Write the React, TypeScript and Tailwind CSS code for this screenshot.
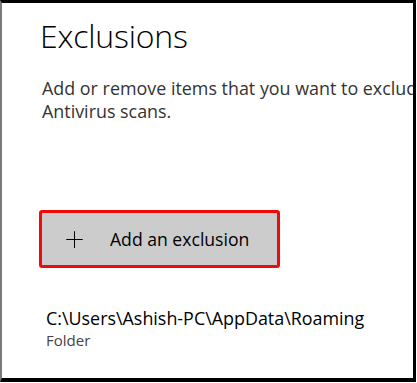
import { Plus } from "lucide-react";

// Windows Security "Exclusions" panel, cropped view
export default function App() {
  return (
    <div className="w-[417px] h-[383px] bg-white">
      <div className="w-[416px] h-[382px] overflow-hidden border-t-[3px] border-r-[3px] border-b-[4px] border-l-2 border-black border-l-[#7b7b7b] bg-white font-['Open_Sans','Noto_Sans',sans-serif]">
        <div className="pl-[36px] pt-[13px]">
          <h1 className="ml-[2px] text-[32px] font-light leading-[40px] text-black tracking-[-0.2px]">Exclusions</h1>
          <p className="mt-[21px] ml-[4px] w-[680px] text-[17.9px] leading-[23px] text-[#333333]">
            Add or remove items that you want to exclude from Windows Defender
            <br />
            Antivirus scans.
          </p>
          <button className="mt-[87px] ml-[1px] flex h-[58px] w-[241px] items-center rounded-[3px] border-[3px] border-[#f00a0a] bg-[#cccccc] text-left">
            <Plus className="ml-[19px] h-[27px] w-[27px] shrink-0 text-black" strokeWidth={0.9} />
            <span className="ml-[22px] text-[17.6px] text-black">Add an exclusion</span>
          </button>
          <div className="mt-[38px] ml-[8px]">
            <div className="text-[17.9px] leading-[24px] text-black">C:\Users\Ashish-PC\AppData\Roaming</div>
            <div className="text-[15px] leading-[20px] text-[#444444]">Folder</div>
          </div>
        </div>
      </div>
    </div>
  );
}
